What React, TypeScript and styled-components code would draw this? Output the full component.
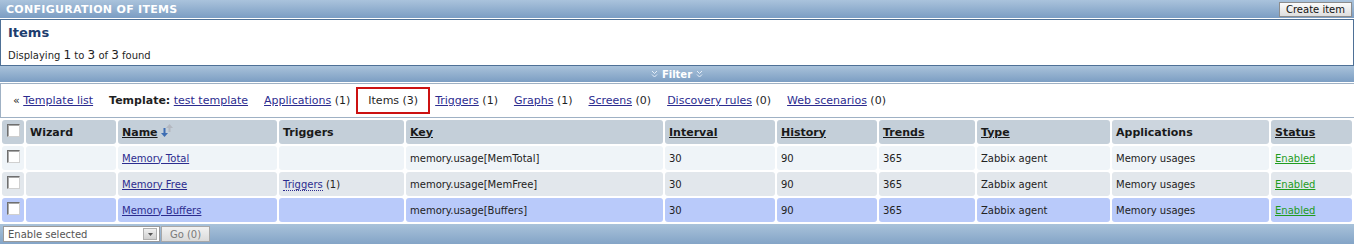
import React from 'react'
import styled, { createGlobalStyle } from 'styled-components'

const GlobalStyle = createGlobalStyle`
  html, body {
    margin: 0;
    padding: 0;
    background: #ffffff;
    font-family: "DejaVu Sans", Verdana, sans-serif;
    font-size: 10px;
    color: #1f1f1f;
  }
`

const COLUMNS = '22px 90px 159px 125px 257px 110px 100px 96px 133px 157px 81px'

const Page = styled.div`
  width: 1354px;
  overflow: hidden;
`

const TitleBar = styled.div`
  height: 18px;
  margin-bottom: 1px;
  display: flex;
  align-items: center;
  justify-content: space-between;
  padding: 0 2px 0 6px;
  background: linear-gradient(#aac3dc, #7b9dc3);
  color: #ffffff;
  font-size: 11px;
  font-weight: bold;
  letter-spacing: 0.3px;
`

const CreateButton = styled.button`
  height: 15px;
  padding: 0 6px;
  border: 1px solid #8c8c8c;
  background: linear-gradient(#fbfbfb, #dedede);
  font-family: inherit;
  font-size: 10px;
  letter-spacing: 0;
  color: #111;
  line-height: 13px;
`

const ItemsBox = styled.div`
  border: 1px solid #4e7096;
  border-bottom: none;
  padding: 5px 7px 0;
  height: 40px;
`

const Heading = styled.div`
  font-size: 13px;
  font-weight: bold;
  color: #1d3d6e;
  line-height: 16px;
`

const Summary = styled.div`
  margin-top: 7px;
  line-height: 14px;
  font-size: 10px;
`

const Num = styled.span`
  font-size: 12px;
`

const FilterBar = styled.div`
  height: 16px;
  border-top: 1px solid #4e7096;
  background: linear-gradient(#a9c2da, #7c9ec3);
  color: #ffffff;
  font-weight: bold;
  font-size: 10px;
  display: flex;
  align-items: center;
  justify-content: center;
  gap: 4px;
`

const NavBox = styled.div`
  margin-top: 1px;
  height: 33px;
  border: 1px solid #9fb1c4;
  border-right: none;
  display: flex;
  align-items: center;
  padding-left: 12px;
  font-size: 11px;
`

const NavItem = styled.span<{ active?: boolean }>`
  margin-right: 16px;
  white-space: nowrap;
  ${p =>
    p.active &&
    `
    margin-left: -10px;
    margin-right: 5px;
    padding: 5px 10px;
    border: 2px solid #cc1111;
  `}
`

const Link = styled.a<{ dotted?: boolean }>`
  color: #2c2c8f;
  text-decoration: ${p => (p.dotted ? 'none' : 'underline')};
  border-bottom: ${p => (p.dotted ? '1px dotted #2c2c8f' : 'none')};
  cursor: pointer;
`

const StatusLink = styled.a`
  color: #1f9c1f;
  text-decoration: underline;
`

const Bold = styled.b`
  font-weight: bold;
`

const TableWrap = styled.div`
  padding: 2px;
  display: flex;
  flex-direction: column;
  gap: 2px;
`

const Row = styled.div`
  display: grid;
  grid-template-columns: ${COLUMNS};
  gap: 2px;
  height: 24px;
`

const Cell = styled.div<{ bg: string; bold?: boolean }>`
  background: ${p => p.bg};
  border-radius: 3px;
  padding: 0 4px;
  display: flex;
  align-items: center;
  white-space: nowrap;
  font-weight: ${p => (p.bold ? 'bold' : 'normal')};
  color: ${p => (p.bold ? '#1a1a1a' : '#222')};
  font-size: ${p => (p.bold ? '11px' : '10px')};
`

const BoxCell = styled(Cell)`
  align-items: flex-start;
  padding: 4px 0 0 5px;
`

const SortTitle = styled.span`
  text-decoration: underline;
`

const CheckBox = styled.span`
  display: block;
  width: 11px;
  height: 11px;
  border: 1px solid #6f6f6f;
  border-right-color: #d0d0d0;
  border-bottom-color: #d0d0d0;
  background: #ffffff;
  box-shadow: inset 1px 1px 0 #a8a8a8;
`

const FooterBar = styled.div`
  height: 22px;
  background: linear-gradient(#a9c2da, #7c9ec3);
  display: flex;
  align-items: flex-start;
  padding: 2px 0 0 3px;
  gap: 1px;
`

const SelectBox = styled.div`
  width: 157px;
  height: 16px;
  border: 1px solid #9a9a9a;
  background: #ffffff;
  display: flex;
  align-items: center;
  justify-content: space-between;
  color: #555;
  font-size: 10px;
  padding-left: 4px;
  box-sizing: border-box;
`

const SelectArrow = styled.span`
  width: 14px;
  height: 12px;
  margin-right: 2px;
  background: linear-gradient(#f0f0f0, #cfcfcf);
  border: 1px solid #b0b0b0;
  box-sizing: border-box;
  display: flex;
  align-items: center;
  justify-content: center;
`

const GoButton = styled.span`
  width: 49px;
  height: 16px;
  border: 1px solid #a8a8a8;
  background: linear-gradient(#f2f2f2, #dadada);
  box-sizing: border-box;
  color: #7a7a7a;
  font-size: 10px;
  display: flex;
  align-items: center;
  justify-content: center;
`

const Chevrons = () => (
  <svg width="7" height="8" viewBox="0 0 7 8">
    <path d="M1 1 L3.5 3.5 L6 1 M1 4.5 L3.5 7 L6 4.5" stroke="#e6eef8" fill="none" strokeWidth="1" />
  </svg>
)

const SortArrows = () => (
  <svg width="12" height="14" viewBox="0 0 12 14" style={{ marginLeft: 3, marginTop: -2 }}>
    <path d="M8.5 0 L12 4 L9.5 4 L9.5 8 L7.5 8 L7.5 4 L5 4 Z" fill="#b4b8c0" />
    <path d="M3.5 13 L0 9 L2.5 9 L2.5 4 L4.5 4 L4.5 9 L7 9 Z" fill="#3d6db3" />
  </svg>
)

interface IItem {
  name: string
  triggers?: number
  key: string
  bg: string
}

const items: IItem[] = [
  { name: 'Memory Total', key: 'memory.usage[MemTotal]', bg: '#eff4f8' },
  { name: 'Memory Free', triggers: 1, key: 'memory.usage[MemFree]', bg: '#e2e7ec' },
  { name: 'Memory Buffers', key: 'memory.usage[Buffers]', bg: '#b9cafa' }
]

const HEAD_BG = '#c4cfd9'

export default function App() {
  return (
    <Page>
      <GlobalStyle />
      <TitleBar>
        <span>CONFIGURATION OF ITEMS</span>
        <CreateButton>Create item</CreateButton>
      </TitleBar>

      <ItemsBox>
        <Heading>Items</Heading>
        <Summary>
          Displaying <Num>1</Num> to <Num>3</Num> of <Num>3</Num> found
        </Summary>
      </ItemsBox>

      <FilterBar>
        <Chevrons />
        <span>Filter</span>
        <Chevrons />
      </FilterBar>

      <NavBox>
        <NavItem>
          « <Link>Template list</Link>
        </NavItem>
        <NavItem>
          <Bold>Template:</Bold> <Link>test template</Link>
        </NavItem>
        <NavItem>
          <Link>Applications</Link> (1)
        </NavItem>
        <NavItem active>Items (3)</NavItem>
        <NavItem>
          <Link>Triggers</Link> (1)
        </NavItem>
        <NavItem>
          <Link>Graphs</Link> (1)
        </NavItem>
        <NavItem>
          <Link>Screens</Link> (0)
        </NavItem>
        <NavItem>
          <Link>Discovery rules</Link> (0)
        </NavItem>
        <NavItem>
          <Link>Web scenarios</Link> (0)
        </NavItem>
      </NavBox>

      <TableWrap>
        <Row>
          <BoxCell bg={HEAD_BG}>
            <CheckBox />
          </BoxCell>
          <Cell bg={HEAD_BG} bold>Wizard</Cell>
          <Cell bg={HEAD_BG} bold>
            <SortTitle>Name</SortTitle>
            <SortArrows />
          </Cell>
          <Cell bg={HEAD_BG} bold>Triggers</Cell>
          <Cell bg={HEAD_BG} bold><SortTitle>Key</SortTitle></Cell>
          <Cell bg={HEAD_BG} bold><SortTitle>Interval</SortTitle></Cell>
          <Cell bg={HEAD_BG} bold><SortTitle>History</SortTitle></Cell>
          <Cell bg={HEAD_BG} bold><SortTitle>Trends</SortTitle></Cell>
          <Cell bg={HEAD_BG} bold><SortTitle>Type</SortTitle></Cell>
          <Cell bg="#ccd5de" bold>Applications</Cell>
          <Cell bg={HEAD_BG} bold><SortTitle>Status</SortTitle></Cell>
        </Row>
        {items.map(item => (
          <Row key={item.name}>
            <BoxCell bg={item.bg}>
              <CheckBox />
            </BoxCell>
            <Cell bg={item.bg} />
            <Cell bg={item.bg}>
              <Link>{item.name}</Link>
            </Cell>
            <Cell bg={item.bg}>
              {item.triggers ? (
                <span>
                  <Link dotted>Triggers</Link> ({item.triggers})
                </span>
              ) : null}
            </Cell>
            <Cell bg={item.bg}>{item.key}</Cell>
            <Cell bg={item.bg}>30</Cell>
            <Cell bg={item.bg}>90</Cell>
            <Cell bg={item.bg}>365</Cell>
            <Cell bg={item.bg}>Zabbix agent</Cell>
            <Cell bg={item.bg}>Memory usages</Cell>
            <Cell bg={item.bg}>
              <StatusLink>Enabled</StatusLink>
            </Cell>
          </Row>
        ))}
      </TableWrap>

      <FooterBar>
        <SelectBox>
          <span>Enable selected</span>
          <SelectArrow>
            <svg width="5" height="3" viewBox="0 0 5 3">
              <path d="M0 0 L5 0 L2.5 3 Z" fill="#555" />
            </svg>
          </SelectArrow>
        </SelectBox>
        <GoButton>Go (0)</GoButton>
      </FooterBar>
    </Page>
  )
}
